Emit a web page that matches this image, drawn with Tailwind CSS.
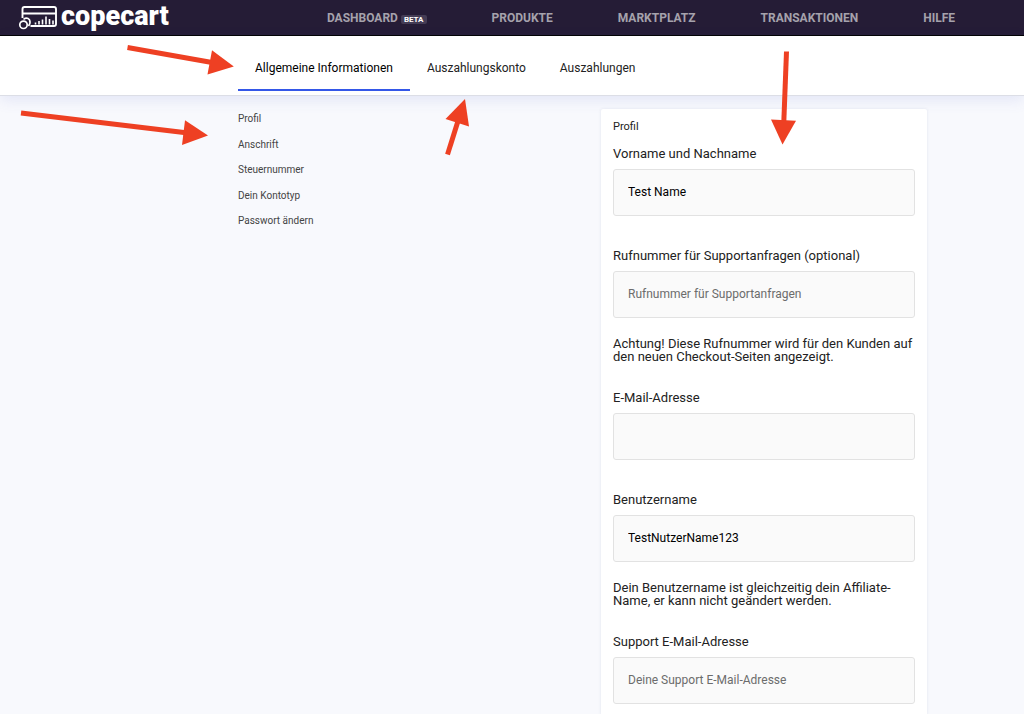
<!DOCTYPE html>
<html lang="de">
<head>
<meta charset="utf-8">
<meta name="viewport" content="width=device-width, initial-scale=1">
<title>copecart – Profil</title>
<script src="https://cdn.jsdelivr.net/npm/@tailwindcss/browser@4"></script>
</head>
<body class="relative min-h-screen overflow-x-hidden bg-[#f8f9fd] font-['Roboto',sans-serif] text-[13px] text-[#222]">

<header class="flex h-9 items-center justify-between border-b border-black bg-[#251c36] pl-[18px] pr-[69px]">
  <a href="#" class="flex items-center gap-[3px] text-white" aria-label="copecart">
    <svg class="h-7 w-10" viewBox="0 0 40 28" fill="none" stroke="currentColor" stroke-width="1.9" aria-hidden="true">
      <path d="M4.500 14V5Q4.500 3 6.500 3H36Q38 3 38 5V20Q38 22 36 22H12.500"/>
      <path d="M4.500 9.500H38" stroke-width="2.200"/>
      <circle cx="5.500" cy="20.800" r="3.700" stroke-width="1.700"/>
      <path d="M5.500 15.300Q9 12.800 11.500 15.800Q13 19 10.500 22" stroke-width="1.600"/>
      <path d="M17.500 20.500V18.500M21 20.500V17M24.500 20.500V15.500M28 20.500V12.500M31.500 20.500V15M35 20.500V16.500" stroke-width="1.600"/>
    </svg>
    <span class="pb-1 text-[27px] font-black leading-7">copecart</span>
  </a>
  <nav class="flex items-center gap-[65px] text-xs font-bold text-[#a5a2ac]" aria-label="Hauptnavigation">
    <a href="#" class="flex items-center gap-[3px]">DASHBOARD <span class="mt-[3px] rounded-xs bg-[#443c55] px-[3px] text-[8px] leading-[9px] text-white">BETA</span></a>
    <a href="#">PRODUKTE</a>
    <a href="#">MARKTPLATZ</a>
    <a href="#">TRANSAKTIONEN</a>
    <a href="#">HILFE</a>
  </nav>
</header>

<nav class="flex h-[60px] items-start border-b border-[#dcdee6] bg-white pl-[238px] text-xs shadow-[0_4px_14px_rgba(70,90,200,0.12)]" aria-label="Kontobereiche">
  <a href="#" aria-current="page" class="flex h-[55px] items-center border-b-2 border-[#3457e8] px-[17px] pt-[10px] text-black">Allgemeine Informationen</a>
  <a href="#" class="flex h-[55px] items-center border-b-2 border-transparent px-[17px] pt-[10px]">Auszahlungskonto</a>
  <a href="#" class="flex h-[55px] items-center border-b-2 border-transparent px-[17px] pt-[10px]">Auszahlungen</a>
</nav>

<main class="grid grid-cols-[363fr_326fr] items-start pl-[238px] pr-[97px] pt-[13px]">
  <ul class="mt-[3px] flex h-[115px] flex-col justify-between text-[10px] leading-[13px] text-[#444]">
    <li><a href="#profil">Profil</a></li>
    <li><a href="#">Anschrift</a></li>
    <li><a href="#">Steuernummer</a></li>
    <li><a href="#">Dein Kontotyp</a></li>
    <li><a href="#">Passwort ändern</a></li>
  </ul>

  <form id="profil" class="rounded-xs bg-white px-3 pb-3 pt-[11px] shadow-[0_0_3px_rgba(60,70,120,0.12)]">
    <h1 class="mb-3 text-[11px] leading-[14px]">Profil</h1>
    <div class="mb-8">
      <label for="name" class="mb-[7px] block leading-4">Vorname und Nachname</label>
      <input id="name" type="text" value="Test Name" class="block h-[47px] w-full rounded-[3px] border border-[#e2e2e2] bg-[#fafafa] px-[14px] pb-[2px] text-xs text-black">
    </div>
    <div class="mb-[27px]">
      <label for="phone" class="mb-[7px] block leading-4">Rufnummer für Supportanfragen (optional)</label>
      <input id="phone" type="tel" placeholder="Rufnummer für Supportanfragen" class="block h-[47px] w-full rounded-[3px] border border-[#e2e2e2] bg-[#fafafa] px-[14px] pb-[2px] text-xs text-black placeholder:text-[#6c6c6c]">
      <p class="mt-[19px] leading-[13px]">Achtung! Diese Rufnummer wird für den Kunden auf den neuen Checkout-Seiten angezeigt.</p>
    </div>
    <div class="mb-8">
      <label for="email" class="mb-[7px] block leading-4">E-Mail-Adresse</label>
      <input id="email" type="email" class="block h-[47px] w-full rounded-[3px] border border-[#e2e2e2] bg-[#fafafa] px-[14px] pb-[2px] text-xs text-black">
    </div>
    <div class="mb-[27px]">
      <label for="user" class="mb-[7px] block leading-4">Benutzername</label>
      <input id="user" type="text" value="TestNutzerName123" class="block h-[47px] w-full rounded-[3px] border border-[#e2e2e2] bg-[#fafafa] px-[14px] pb-[2px] text-xs text-black">
      <p class="mt-[19px] leading-[13px]">Dein Benutzername ist gleichzeitig dein Affiliate-Name, er kann nicht geändert werden.</p>
    </div>
    <div>
      <label for="support" class="mb-[7px] block leading-4">Support E-Mail-Adresse</label>
      <input id="support" type="email" placeholder="Deine Support E-Mail-Adresse" class="block h-[47px] w-full rounded-[3px] border border-[#e2e2e2] bg-[#fafafa] px-[14px] pb-[2px] text-xs text-black placeholder:text-[#6c6c6c]">
    </div>
  </form>
</main>

<!-- Annotation arrows -->
<svg class="pointer-events-none absolute left-0 top-0 h-[160px] w-[1024px]" viewBox="0 0 1024 160" fill="#ee4023" stroke="#ee4023" aria-hidden="true">
  <g stroke-width="5">
    <path d="M127.500 47.500L212 62.500"/>
    <path d="M21 113L186 132.800"/>
    <path d="M447.500 154.500L458 121"/>
    <path d="M786.500 51.500L783.800 122"/>
  </g>
  <g stroke="none">
    <path d="M233.800 66.500L212 50.200L207.500 74.500Z"/>
    <path d="M208 135.500L185 120.300L182 145Z"/>
    <path d="M465 99L445.500 119L469 126.500Z"/>
    <path d="M782.500 144.500L771 119.500L796 120.800Z"/>
  </g>
</svg>
</body>
</html>
